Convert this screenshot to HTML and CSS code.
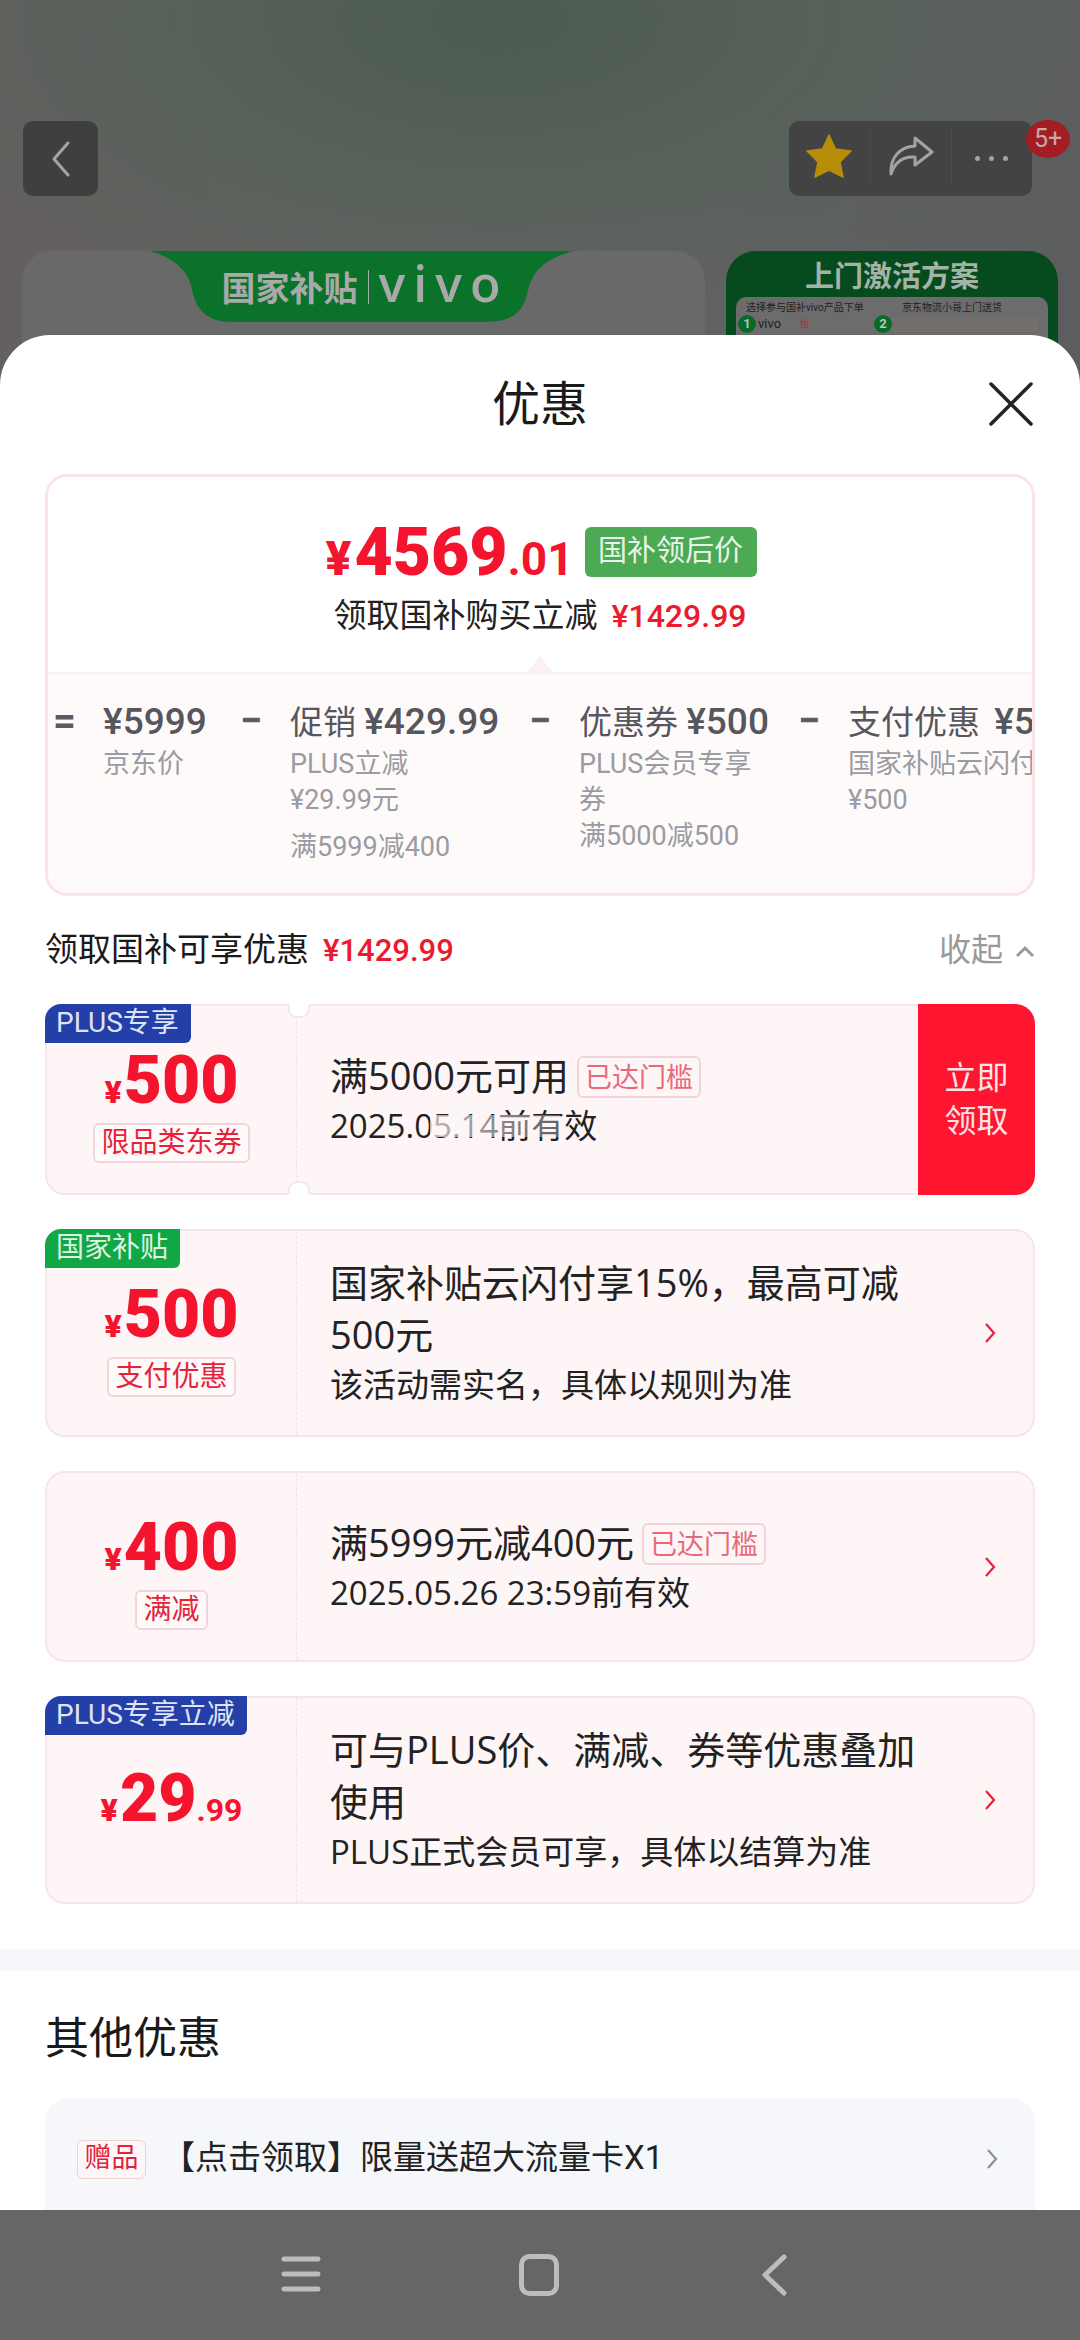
FILE: index.html
```html
<!DOCTYPE html>
<html lang="zh">
  <head>
    <meta charset="utf-8">
    <title>优惠</title>
    <link rel="stylesheet" href="styles.css">
  </head>
  <body>
    <div class="page">
      <div class="backdrop">
        <div class="topbar">
          <div class="back-btn">
            <svg width="20" height="36" viewBox="0 0 20 36"><path d="M17 2 L3 18 L17 34" fill="none" stroke="#a4a4a4" stroke-width="3" stroke-linecap="round" stroke-linejoin="round"/></svg>
          </div>
          <div class="tools">
            <div class="tool">
              <svg width="46" height="44" viewBox="0 0 46 44"><path d="M23 1 L29.5 15 L45 17 L34 28 L37 43 L23 36 L9 43 L12 28 L1 17 L16.500 15 Z" fill="#b58d08" stroke="#b58d08" stroke-width="1.500" stroke-linejoin="round"/></svg>
            </div>
            <div class="tool tool-line">
              <svg width="46" height="40" viewBox="0 0 46 40"><path d="M27 2 L44 16 L27 29 V21 C15 20 7 26 3 38 C2 22 11 11 27 10 Z" fill="none" stroke="#a3a3a3" stroke-width="3" stroke-linejoin="round"/></svg>
            </div>
            <div class="tool tool-line">
              <span class="dots"><i></i><i></i><i></i></span>
            </div>
            <span class="count-badge">5+</span>
          </div>
        </div>
        <div class="banners">
          <div class="banner-main">
            <div class="banner-green">
              <svg class="banner-shape" width="423" height="71" viewBox="0 0 423 71"><path d="M0 0 H423 C395 8 382 20 378 40 C373 62 362 71 335 71 H82 C58 71 46 60 42 38 C38 20 26 8 0 0 Z" fill="#0a7329"/></svg>
              <span class="banner-cn">国家补贴</span>
              <span class="banner-sep"></span>
              <span class="banner-brand">vivo</span>
            </div>
          </div>
          <div class="banner-side">
            <div class="side-title">上门激活方案</div>
            <div class="side-box">
              <div class="side-heads">
                <span>选择参与国补vivo产品下单</span>
                <span>京东物流小哥上门送货</span>
              </div>
              <div class="side-steps">
                <span class="step-no">1</span>
                <span class="step-brand">vivo</span>
                <span class="step-red">抢</span>
                <span class="step-no step-two">2</span>
                <span class="step-bar"></span>
              </div>
            </div>
          </div>
        </div>
      </div>

      <div class="sheet">
        <div class="sheet-head">
          <h1 class="sheet-title">优惠</h1>
          <svg class="close" width="44" height="44" viewBox="0 0 44 44"><path d="M2 2 L42 42 M42 2 L2 42" fill="none" stroke="#222" stroke-width="3.500" stroke-linecap="round"/></svg>
        </div>

        <div class="summary">
          <div class="summary-top">
            <div class="final-row">
              <span class="final-price"><small class="final-yen">¥</small>4569<small class="final-cents">.01</small></span>
              <span class="final-tag">国补领后价</span>
            </div>
            <div class="final-note">领取国补购买立减<b class="red-num">¥1429.99</b></div>
            <span class="pointer"></span>
          </div>
          <div class="breakdown">
            <span class="op op-eq">=</span>
            <div class="part">
              <div class="part-head"><b>¥5999</b></div>
              <div class="part-sub">京东价</div>
            </div>
            <span class="op">−</span>
            <div class="part">
              <div class="part-head">促销 <b>¥429.99</b></div>
              <div class="part-sub">PLUS立减<br>¥29.99元</div>
              <div class="part-sub part-sub-gap">满5999减400</div>
            </div>
            <span class="op">−</span>
            <div class="part">
              <div class="part-head">优惠券 <b>¥500</b></div>
              <div class="part-sub">PLUS会员专享券</div>
              <div class="part-sub">满5000减500</div>
            </div>
            <span class="op">−</span>
            <div class="part">
              <div class="part-head">支付优惠 <b>¥500</b></div>
              <div class="part-sub">国家补贴云闪付<br>¥500</div>
            </div>
          </div>
        </div>

        <div class="section-row">
          <div class="section-label">领取国补可享优惠<b class="red-num">¥1429.99</b></div>
          <div class="fold">收起
            <svg width="20" height="13" viewBox="0 0 20 13"><path d="M2 11 L10 3 L18 11" fill="none" stroke="#999" stroke-width="3"/></svg>
          </div>
        </div>

        <div class="coupons">
          <div class="coupon coupon-notched">
            <span class="corner corner-blue">PLUS专享</span>
            <div class="coupon-left">
              <div class="amount"><small class="yen">¥</small>500</div>
              <span class="pill">限品类东券</span>
            </div>
            <div class="coupon-body">
              <div class="coupon-title">满5000元可用<span class="reached">已达门槛</span></div>
              <div class="coupon-sub">2025.05.14前有效<span class="smudge"></span></div>
            </div>
            <div class="claim">立即<br>领取</div>
          </div>

          <div class="coupon">
            <span class="corner corner-green">国家补贴</span>
            <div class="coupon-left">
              <div class="amount"><small class="yen">¥</small>500</div>
              <span class="pill">支付优惠</span>
            </div>
            <div class="coupon-body">
              <div class="coupon-title">国家补贴云闪付享15%，最高可减500元</div>
              <div class="coupon-sub">该活动需实名，具体以规则为准</div>
            </div>
            <svg class="arrow" width="12" height="22" viewBox="0 0 12 22"><path d="M2 2 L10 11 L2 20" fill="none" stroke="#e8213a" stroke-width="2.200"/></svg>
          </div>

          <div class="coupon">
            <div class="coupon-left">
              <div class="amount"><small class="yen">¥</small>400</div>
              <span class="pill">满减</span>
            </div>
            <div class="coupon-body">
              <div class="coupon-title">满5999元减400元<span class="reached">已达门槛</span></div>
              <div class="coupon-sub">2025.05.26 23:59前有效</div>
            </div>
            <svg class="arrow" width="12" height="22" viewBox="0 0 12 22"><path d="M2 2 L10 11 L2 20" fill="none" stroke="#e8213a" stroke-width="2.200"/></svg>
          </div>

          <div class="coupon">
            <span class="corner corner-blue">PLUS专享立减</span>
            <div class="coupon-left coupon-left-plain">
              <div class="amount"><small class="yen">¥</small>29<small class="cents">.99</small></div>
            </div>
            <div class="coupon-body">
              <div class="coupon-title">可与PLUS价、满减、券等优惠叠加使用</div>
              <div class="coupon-sub">PLUS正式会员可享，具体以结算为准</div>
            </div>
            <svg class="arrow" width="12" height="22" viewBox="0 0 12 22"><path d="M2 2 L10 11 L2 20" fill="none" stroke="#e8213a" stroke-width="2.200"/></svg>
          </div>
        </div>

        <div class="band"></div>

        <h2 class="other-title">其他优惠</h2>
        <div class="gift">
          <span class="gift-tag">赠品</span>
          <span class="gift-text">【点击领取】限量送超大流量卡X1</span>
          <svg class="gift-arrow" width="12" height="22" viewBox="0 0 12 22"><path d="M2 2 L10 11 L2 20" fill="none" stroke="#8b8f98" stroke-width="2.200"/></svg>
        </div>
      </div>

      <div class="navbar">
        <svg width="40" height="40" viewBox="0 0 40 40"><path d="M3 5 H37 M3 20 H37 M3 35 H37" fill="none" stroke="#bdbdbd" stroke-width="5" stroke-linecap="round"/></svg>
        <svg width="40" height="42" viewBox="0 0 40 42"><rect x="2.500" y="2.500" width="35" height="37" rx="8" fill="none" stroke="#bdbdbd" stroke-width="5"/></svg>
        <svg class="nav-back" width="28" height="42" viewBox="0 0 28 42"><path d="M24 3 L5 21 L24 39" fill="none" stroke="#bdbdbd" stroke-width="5" stroke-linecap="round" stroke-linejoin="round"/></svg>
      </div>
    </div>
  </body>
</html>
```

FILE: styles.css
```css
* {
  box-sizing: border-box;
}
body {
  margin: 0;
  font-family: Roboto, "Noto Sans CJK SC", sans-serif;
  color: #1a1a1a;
}
.page {
  width: 1080px;
  height: 2340px;
  overflow: hidden;
  display: flex;
  flex-direction: column;
}

/* dimmed page behind the sheet */
.backdrop {
  height: 385px;
  flex: none;
  overflow: hidden;
  padding-top: 121px;
  background:
    radial-gradient(ellipse 620px 300px at 500px 20px, #4c5a50 0%, #566159 50%, rgba(100, 102, 100, 0) 100%),
    linear-gradient(90deg, #63605f 0%, #636363 55%, #5c5d5f 100%);
}
.topbar {
  display: flex;
  justify-content: space-between;
  padding: 0 48px 0 23px;
}
.back-btn {
  width: 75px;
  height: 75px;
  background: #3f3f3f;
  border-radius: 10px;
  display: flex;
  align-items: center;
  justify-content: center;
}
.tools {
  position: relative;
  width: 243px;
  height: 75px;
  background: #434343;
  border-radius: 10px;
  display: flex;
  align-items: center;
}
.tool {
  height: 54px;
  width: 82px;
  display: flex;
  align-items: center;
  justify-content: center;
  margin-top: -6px;
}
.tool-line {
  border-left: 1px solid #4c4c4c;
}
.dots {
  display: flex;
  gap: 9px;
  margin-top: 6px;
}
.dots i {
  width: 5px;
  height: 5px;
  background: #a3a3a3;
  border-radius: 50%;
}
.count-badge {
  position: absolute;
  top: -1px;
  right: -38px;
  width: 44px;
  height: 38px;
  border-radius: 50%;
  background: #a31d22;
  color: #c9a8a8;
  font-size: 25px;
  line-height: 38px;
  text-align: center;
}
.banners {
  display: flex;
  gap: 21px;
  margin-top: 55px;
  padding-left: 22px;
}
.banner-main {
  width: 683px;
  height: 200px;
  background: #696969;
  border-radius: 30px 30px 0 0;
  display: flex;
  justify-content: center;
  padding-right: 5px;
}
.banner-green {
  position: relative;
  width: 423px;
  height: 71px;
  display: flex;
  align-items: center;
  justify-content: center;
  gap: 10px;
  color: #a9a9a9;
}
.banner-shape {
  position: absolute;
  left: 0;
  top: 0;
}
.banner-cn {
  position: relative;
  font-size: 34px;
  font-weight: 700;
}
.banner-sep {
  position: relative;
  width: 1px;
  height: 34px;
  background: #a9a9a9;
}
.banner-brand {
  position: relative;
  font-family: "Open Sans", sans-serif;
  font-weight: 600;
  font-size: 50px;
  line-height: 50px;
  letter-spacing: 8px;
  margin: -8px -8px 0 0;
}
.banner-side {
  width: 332px;
  height: 200px;
  background: #064b1e;
  border-radius: 30px 30px 0 0;
  padding: 8px 10px 0;
}
.side-title {
  height: 38px;
  line-height: 36px;
  text-align: center;
  font-size: 29px;
  font-weight: 700;
  color: #a3b3a8;
}
.side-box {
  background: #6c6c6c;
  border-radius: 10px 10px 0 0;
  height: 120px;
  padding: 4px 10px;
  color: #222;
}
.side-heads {
  display: flex;
  justify-content: space-between;
  font-size: 10px;
  line-height: 14px;
  padding-right: 36px;
}
.side-steps {
  display: flex;
  align-items: center;
  height: 18px;
  margin-left: -8px;
  font-size: 13px;
  line-height: 16px;
}
.step-no {
  width: 18px;
  height: 18px;
  line-height: 18px;
  border-radius: 50%;
  background: #0a6a2a;
  color: #b5c5ba;
  text-align: center;
  font-size: 13px;
  font-weight: 700;
}
.step-brand {
  width: 44px;
  text-align: left;
  padding-left: 2px;
}
.step-red {
  width: 74px;
  font-size: 9px;
  color: #a83232;
}
.step-bar {
  flex: 1;
  height: 14px;
  background: #746e6c;
  margin-top: 2px;
}

/* sheet */
.sheet {
  position: relative;
  flex: 1;
  min-height: 0;
  overflow: hidden;
  margin-top: -50px;
  background: #fff;
  border-radius: 50px 50px 0 0;
}
.sheet-head {
  position: relative;
  height: 139px;
  padding-top: 42px;
}
.sheet-title {
  margin: 0;
  text-align: center;
  font-size: 48px;
  font-weight: 400;
  line-height: 56px;
}
.close {
  position: absolute;
  left: 989px;
  top: 47px;
}

/* summary card */
.summary {
  margin: 0 45px;
  height: 422px;
  border: 3px solid #fbe4e9;
  border-radius: 22px;
  overflow: hidden;
  background: #fffafa;
}
.summary-top {
  position: relative;
  height: 197px;
  background: #fff;
  border-bottom: 2px solid #fdeff1;
  padding-top: 49px;
}
.final-row {
  display: flex;
  justify-content: center;
  align-items: center;
  gap: 11px;
  height: 60px;
  padding-left: 2px;
}
.final-price {
  font-size: 66px;
  font-weight: 900;
  line-height: 60px;
  color: #f5142d;
}
.final-yen {
  font-size: 48px;
  font-weight: 900;
  margin-right: 3px;
}
.final-cents {
  font-size: 46px;
  font-weight: 700;
}
.final-tag {
  width: 172px;
  height: 50px;
  line-height: 48px;
  background: #4caa55;
  color: #e8f4e8;
  border-radius: 6px;
  font-size: 29px;
  text-align: center;
  margin-bottom: 8px;
}
.final-note {
  margin-top: 8px;
  text-align: center;
  font-size: 33px;
  line-height: 44px;
  color: #222;
}
.red-num {
  margin-left: 14px;
  color: #ec1a30;
  font-size: 32px;
  font-weight: 500;
}
.pointer {
  position: absolute;
  left: 478px;
  bottom: -2px;
  width: 0;
  height: 0;
  border-left: 14px solid transparent;
  border-right: 14px solid transparent;
  border-bottom: 18px solid #fdf0f2;
}
.breakdown {
  display: flex;
  align-items: flex-start;
  padding: 24px 0 0 5px;
}
.op {
  flex: none;
  width: 22px;
  height: 48px;
  margin: 0 28px 0 29px;
  font-size: 40px;
  font-weight: 700;
  line-height: 46px;
  text-align: center;
  color: #5a5b63;
}
.op-eq {
  width: 23px;
  margin: 0 27px 0 0;
}
.part {
  flex: none;
}
.part:nth-of-type(1) {
  width: 108px;
}
.part:nth-of-type(2) {
  width: 210px;
}
.part:nth-of-type(3) {
  width: 190px;
}
.part:nth-of-type(4) {
  width: 240px;
}
.part:nth-of-type(4) b {
  margin-left: 6px;
}
.part-head {
  height: 48px;
  line-height: 48px;
  font-size: 33px;
  color: #55565e;
  white-space: nowrap;
}
.part-head b {
  font-size: 37px;
  font-weight: 500;
}
.part-sub {
  font-size: 27px;
  line-height: 36px;
  color: #9a9ba3;
}
.part-sub-gap {
  margin-top: 11px;
}

/* coupons */
.section-row {
  display: flex;
  justify-content: space-between;
  align-items: center;
  height: 108px;
  padding: 0 45px 6px;
}
.section-label {
  font-size: 33px;
}
.section-label .red-num {
  font-size: 31px;
}
.fold {
  display: flex;
  align-items: center;
  gap: 12px;
  font-size: 32px;
  color: #999;
}
.fold svg {
  margin-top: 8px;
}
.coupons {
  display: flex;
  flex-direction: column;
  gap: 34px;
  padding: 0 45px;
}
.coupon {
  position: relative;
  display: flex;
  align-items: center;
  min-height: 191px;
  background: #fdf5f6;
  border: 2px solid #f7e6e9;
  border-radius: 20px;
}
.corner {
  position: absolute;
  left: -2px;
  top: -2px;
  height: 39px;
  line-height: 38px;
  padding: 0 12px 0 11px;
  font-size: 28px;
  color: #dfe4f4;
  border-radius: 16px 0 6px 0;
}
.corner-blue {
  background: #2440a8;
}
.corner-green {
  background: #0fa845;
  color: #e0f2e4;
}
.coupon-left {
  flex: none;
  align-self: stretch;
  width: 250px;
  border-right: 1px dashed #f5e0e4;
  display: flex;
  flex-direction: column;
  align-items: center;
  justify-content: center;
  padding-top: 15px;
  text-align: center;
}
.coupon-left-plain {
  padding-top: 8px;
}
.amount {
  font-size: 66px;
  font-weight: 900;
  line-height: 60px;
  color: #f5142d;
  white-space: nowrap;
}
.yen {
  font-size: 32px;
  font-weight: 900;
  margin-right: 2px;
}
.cents {
  font-size: 32px;
  font-weight: 700;
}
.pill {
  margin-top: 1px;
  height: 40px;
  line-height: 36px;
  padding: 0 6px;
  font-size: 28px;
  color: #e8213a;
  background: #fffafa;
  border: 2px solid #f2d5da;
  border-radius: 6px;
}
.coupon-body {
  flex: 1;
  min-width: 0;
  padding: 25px 0 25px 33px;
  font-family: "Open Sans", "Noto Sans CJK SC", sans-serif;
}
.coupon-title {
  max-width: 605px;
  font-size: 38px;
  line-height: 52px;
  color: #222;
}
.coupon-sub {
  position: relative;
  font-size: 33px;
  line-height: 50px;
  color: #222;
  white-space: nowrap;
}
.smudge {
  position: absolute;
  left: 100px;
  top: 14px;
  width: 130px;
  height: 22px;
  background: linear-gradient(90deg, rgba(253, 245, 246, 0.7), rgba(253, 245, 246, 0.3));
}
.reached {
  display: inline-block;
  vertical-align: 3px;
  margin-left: 8px;
  height: 42px;
  line-height: 38px;
  padding: 0 6px;
  font-size: 27px;
  color: #e8697a;
  border: 2px solid #f2d5da;
  border-radius: 6px;
}
.claim {
  flex: none;
  align-self: stretch;
  width: 117px;
  margin: -2px -2px -2px 0;
  border-radius: 0 20px 20px 0;
  background: #ff1530;
  color: #fbe4e6;
  font-size: 32px;
  line-height: 43px;
  text-align: center;
  display: flex;
  align-items: center;
  justify-content: center;
}
.arrow {
  position: absolute;
  right: 37px;
  top: 50%;
  margin-top: -11px;
}
.coupon-notched::before,
.coupon-notched::after {
  content: "";
  position: absolute;
  left: 241px;
  width: 18px;
  height: 10px;
  background: #fff;
  border: 2px solid #f7e6e9;
}
.coupon-notched::before {
  top: -2px;
  border-top-color: #fff;
  border-radius: 0 0 9px 9px;
}
.coupon-notched::after {
  bottom: -2px;
  border-bottom-color: #fff;
  border-radius: 9px 9px 0 0;
}

/* other offers */
.band {
  height: 22px;
  margin-top: 45px;
  background: #f6f7fb;
}
.other-title {
  margin: 0;
  height: 127px;
  line-height: 136px;
  padding-left: 45px;
  font-size: 44px;
  font-weight: 400;
}
.gift {
  display: flex;
  align-items: flex-start;
  height: 200px;
  margin: 0 45px;
  padding: 42px 37px 0 32px;
  background: #f6f7fb;
  border-radius: 24px 24px 0 0;
}
.gift-tag {
  width: 69px;
  height: 39px;
  line-height: 35px;
  text-align: center;
  font-size: 27px;
  color: #e0233c;
  background: #fff6f7;
  border: 1px solid #f2cfd5;
  border-radius: 6px;
  margin-right: 16px;
}
.gift-text {
  flex: 1;
  font-size: 33px;
  line-height: 36px;
  color: #222;
}
.gift-arrow {
  margin-top: 8px;
}

/* system nav */
.navbar {
  flex: none;
  height: 130px;
  background: #666;
  display: flex;
  align-items: flex-start;
  gap: 198px;
  padding: 44px 0 0 281px;
}
.nav-back {
  margin-left: 3px;
}
```
